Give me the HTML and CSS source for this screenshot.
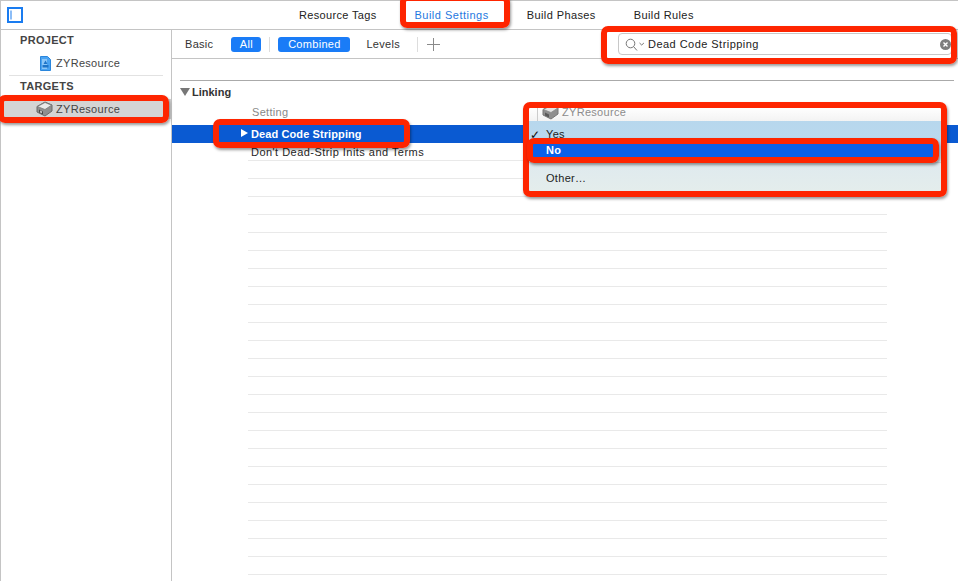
FILE: index.html
```html
<!doctype html>
<html lang="en">
<head>
<meta charset="utf-8" />
<title>Build Settings</title>
<link rel="stylesheet" href="styles.css">
</head>
<body>
<div class="app">
  <header class="topbar">
    <svg class="nav-toggle" width="16" height="16" viewBox="0 0 16 16"><rect x="1" y="1" width="14" height="14" fill="none" stroke="#1a7cf0" stroke-width="2"/><rect x="3.500" y="3.500" width="1" height="9" fill="#1a7cf0"/></svg>
    <nav class="tabs">
      <span class="tab">Resource Tags</span>
      <span class="tab active">Build Settings</span>
      <span class="tab">Build Phases</span>
      <span class="tab">Build Rules</span>
    </nav>
  </header>
  <div class="body">
    <aside class="sidebar">
      <h4>PROJECT</h4>
      <div class="item project">
        <svg width="11" height="15" viewBox="0 0 11 15"><path d="M.5.5h7l3 3v11H.5z" fill="#4aa3f2" stroke="#2a86dc"/><path d="M2 3h5v10H2z" fill="#8cc6f7"/><path d="M2.500 11.500h6v-2.500h-6zM3.500 8l2-3.500 2 3.500z" fill="#1e74c8"/></svg>
        <span>ZYResource</span>
      </div>
      <h4 class="targets">TARGETS</h4>
      <div class="item selected">
        <svg width="17" height="16" viewBox="0 0 17 16"><path d="M1 5.500l8-4.500 7 3v6l-7 5-8-4z" fill="#8f8f8f" stroke="#6a6a6a"/><path d="M1.500 5.500l7.500-4 6.500 2.700-6.500 4.300z" fill="#e9e9e9" stroke="#777" stroke-width=".7"/><path d="M3 8.500l4 2v3l-4-2z" fill="#4a4a4a"/><path d="M4.200 9.500l1.600.8v2l-1.600-.8z" fill="#ddd"/></svg>
        <span>ZYResource</span>
      </div>
    </aside>
    <main class="main">
      <div class="filterbar">
        <span class="filter">Basic</span>
        <span class="pill all">All</span>
        <i class="vsep"></i>
        <span class="pill combined">Combined</span>
        <span class="filter levels">Levels</span>
        <i class="vsep plus-sep"></i>
        <svg class="plus" width="13" height="13" viewBox="0 0 13 13"><path d="M6.500 0v13M0 6.500h13" stroke="#8a8a8a" fill="none"/></svg>
        <div class="search">
          <svg width="21" height="13" viewBox="0 0 21 13"><circle cx="5.500" cy="5.500" r="4.300" fill="none" stroke="#777"/><path d="M8.500 8.500l3.500 4" stroke="#777" fill="none"/><path d="M14.500 5l2.200 2 2.200-2" stroke="#777" fill="none"/></svg>
          <span class="query">Dead Code Stripping</span>
          <svg class="clear" width="11" height="11" viewBox="0 0 11 11"><circle cx="5.500" cy="5.500" r="5.500" fill="#7d7d7d"/><path d="M3.500 3.500l4 4M7.500 3.500l-4 4" stroke="#fff" stroke-width="1.400"/></svg>
        </div>
      </div>
      <section class="settings">
        <div class="group"><i class="disclosure"></i>Linking</div>
        <div class="colhead">Setting</div>
        <div class="row selected-row"><i class="arrow"></i>Dead Code Stripping</div>
        <div class="row plain">Don't Dead-Strip Inits and Terms</div>
        <div class="rules"></div>
      </section>
    </main>
  </div>

  <div class="popup">
    <div class="popup-head">
      <i class="head-sep"></i>
      <svg width="17" height="16" viewBox="0 0 17 16"><path d="M1 5.500l8-4.500 7 3v6l-7 5-8-4z" fill="#8f8f8f" stroke="#777"/><path d="M1.500 5.500l7.500-4 6.500 2.700-6.500 4.300z" fill="#e4e4e4" stroke="#888" stroke-width=".7"/><path d="M3 8.500l4 2v3l-4-2z" fill="#5a5a5a"/></svg>
      <span>ZYResource</span>
    </div>
    <div class="menu">
      <div class="opt checked"><b>✓</b>Yes</div>
      <div class="opt current">No</div>
      <div class="menu-sep"></div>
      <div class="opt other">Other…</div>
    </div>
  </div>

  <i class="mark mark-tab"></i>
  <i class="mark mark-search"></i>
  <i class="mark mark-target"></i>
  <i class="mark mark-row"></i>
  <i class="mark mark-popup"></i>
  <i class="mark mark-no"></i>
</div>
</body>
</html>
```

FILE: styles.css
```css
:root{
  --line:#c4c4c4;
  --rule:#e9e9e9;
  --blue:#1a7cf7;
  --sel:#0a5ad2;
  --red:#fe2500;
  --text:#262626;
}
*{box-sizing:border-box;margin:0;padding:0}
html,body{height:100%;overflow:hidden;background:#fff}
body{font-family:"Liberation Sans",Arial,sans-serif;font-size:11px;color:var(--text);letter-spacing:.3px}
.app{position:relative;width:958px;height:581px;display:flex;flex-direction:column;border-top:1px solid var(--line);border-left:1px solid var(--line)}

/* top tabs */
.topbar{height:29px;flex:none;display:flex;align-items:center;border-bottom:1px solid var(--line);position:relative;padding-left:6px}
.nav-toggle{flex:none}
.tabs{display:flex;margin-left:276px;gap:38px;padding-bottom:1px;letter-spacing:.4px}
.tab{color:#222}
.tab:first-child{letter-spacing:.33px}
.tab.active{color:#1f78e0;letter-spacing:.5px}

.body{flex:1;display:flex;min-height:0}

/* left column */
.sidebar{width:171px;flex:none;border-right:1px solid var(--line);padding-top:4px}
.sidebar h4{font-size:11px;font-weight:700;color:#444;padding-left:19px;line-height:13px}
.sidebar .targets{margin:0 8px;padding:3px 0 0 11px;border-top:1px solid #e2e2e2;line-height:14px}
.item{display:flex;align-items:center;gap:3px;height:18px;color:#444}
.item.project{padding-left:39px;gap:5px;margin:7px 0 3px}
.item.selected{margin-top:6px;padding-left:35px;background:#d4d4d4;height:20px}

/* filter row */
.main{flex:1;min-width:0;display:flex;flex-direction:column}
.filterbar{height:29px;flex:none;display:flex;align-items:center;border-bottom:1px solid var(--line);padding-left:13px}
.filter{color:#333}
.pill{background:var(--blue);color:#fff;border-radius:3px;height:15px;line-height:15px;text-align:center}
.all{width:30px;margin-left:18px}
.vsep{width:1px;height:15px;background:#ddd;margin:0 8px}
.combined{width:72px}
.levels{margin-left:16px}
.plus-sep{margin-left:17px}
.plus{margin-left:1px}
.search{position:relative;margin-left:178px;width:334px;height:22px;border:1px solid #c8c8c8;border-radius:4px;display:flex;align-items:center;padding-left:6px;gap:2px;color:#222;letter-spacing:.46px}
.clear{position:absolute;right:0;top:5px}

/* settings table */
.settings{flex:1;min-height:0;padding-top:21px;display:flex;flex-direction:column}
.group{margin:0 4px 0 8px;border-top:1px solid #aaa;height:23px;font-weight:700;color:#333;display:flex;align-items:center;letter-spacing:0}
.disclosure{width:0;height:0;border-left:5px solid transparent;border-right:5px solid transparent;border-top:8px solid #777;margin-right:2px}
.colhead{padding-left:80px;color:#888;height:22px;line-height:18px}
.row{height:18px;line-height:18px;padding-left:79px}
.selected-row{background:var(--sel);color:#fff;font-weight:700;position:relative;letter-spacing:.1px}
.arrow{position:absolute;left:69px;top:4px;width:0;height:0;border-top:4.500px solid transparent;border-bottom:4.500px solid transparent;border-left:7px solid #fff}
.plain{margin:0 71px 0 76px;padding-left:3px;border-bottom:1px solid var(--rule);letter-spacing:.46px}
.rules{flex:1;margin:0 71px 0 76px;background:repeating-linear-gradient(to bottom,#fff 0,#fff 17px,var(--rule) 17px,var(--rule) 18px)}

/* value popup */
.popup{position:absolute;left:528px;top:106px;width:412px;height:84px;display:flex;flex-direction:column;box-shadow:0 1px 2px rgba(0,0,0,.35)}
.popup-head{height:14px;flex:none;background:linear-gradient(to bottom,#fff,#f3f3f3);color:#8c8c8c;display:flex;align-items:flex-start;gap:3px;padding-left:8px;overflow:hidden}
.popup-head span{line-height:11px}
.popup-head svg{margin-top:-3px;margin-left:1px;flex:none}
.head-sep{width:1px;height:14px;background:#ccc}
.menu{flex:1;background:linear-gradient(to bottom,#b7d7ed 0,#bcdaee 40%,#dfeaee 62%,#e4edec 100%);color:#222;padding-top:6px}
.opt{height:14px;line-height:14px;padding-left:17px;position:relative}
.opt b{position:absolute;left:1px;top:1px;font-size:12px;font-weight:400;color:#111}
.opt.current{background:#0a60e8;color:#fff;font-weight:700;margin:3px 6px 0 4px;padding-left:13px;height:13px;line-height:13px}
.menu-sep{height:1px;background:#c9d4d6;margin-top:5px}
.other{margin-top:8px}

/* red annotation frames */
.mark{position:absolute;border:6px solid var(--red);border-radius:7px;box-shadow:1px 2px 3px rgba(0,0,0,.4)}
.mark-tab{left:399px;top:-6px;width:110px;height:33px}
.mark-search{left:600px;top:25px;width:356px;height:38px}
.mark-target{left:-3px;top:94px;width:171px;height:28px}
.mark-row{left:212px;top:118px;width:197px;height:29px}
.mark-popup{left:522px;top:101px;width:424px;height:95px}
.mark-no{left:526px;top:137px;width:412px;height:25px}
```
